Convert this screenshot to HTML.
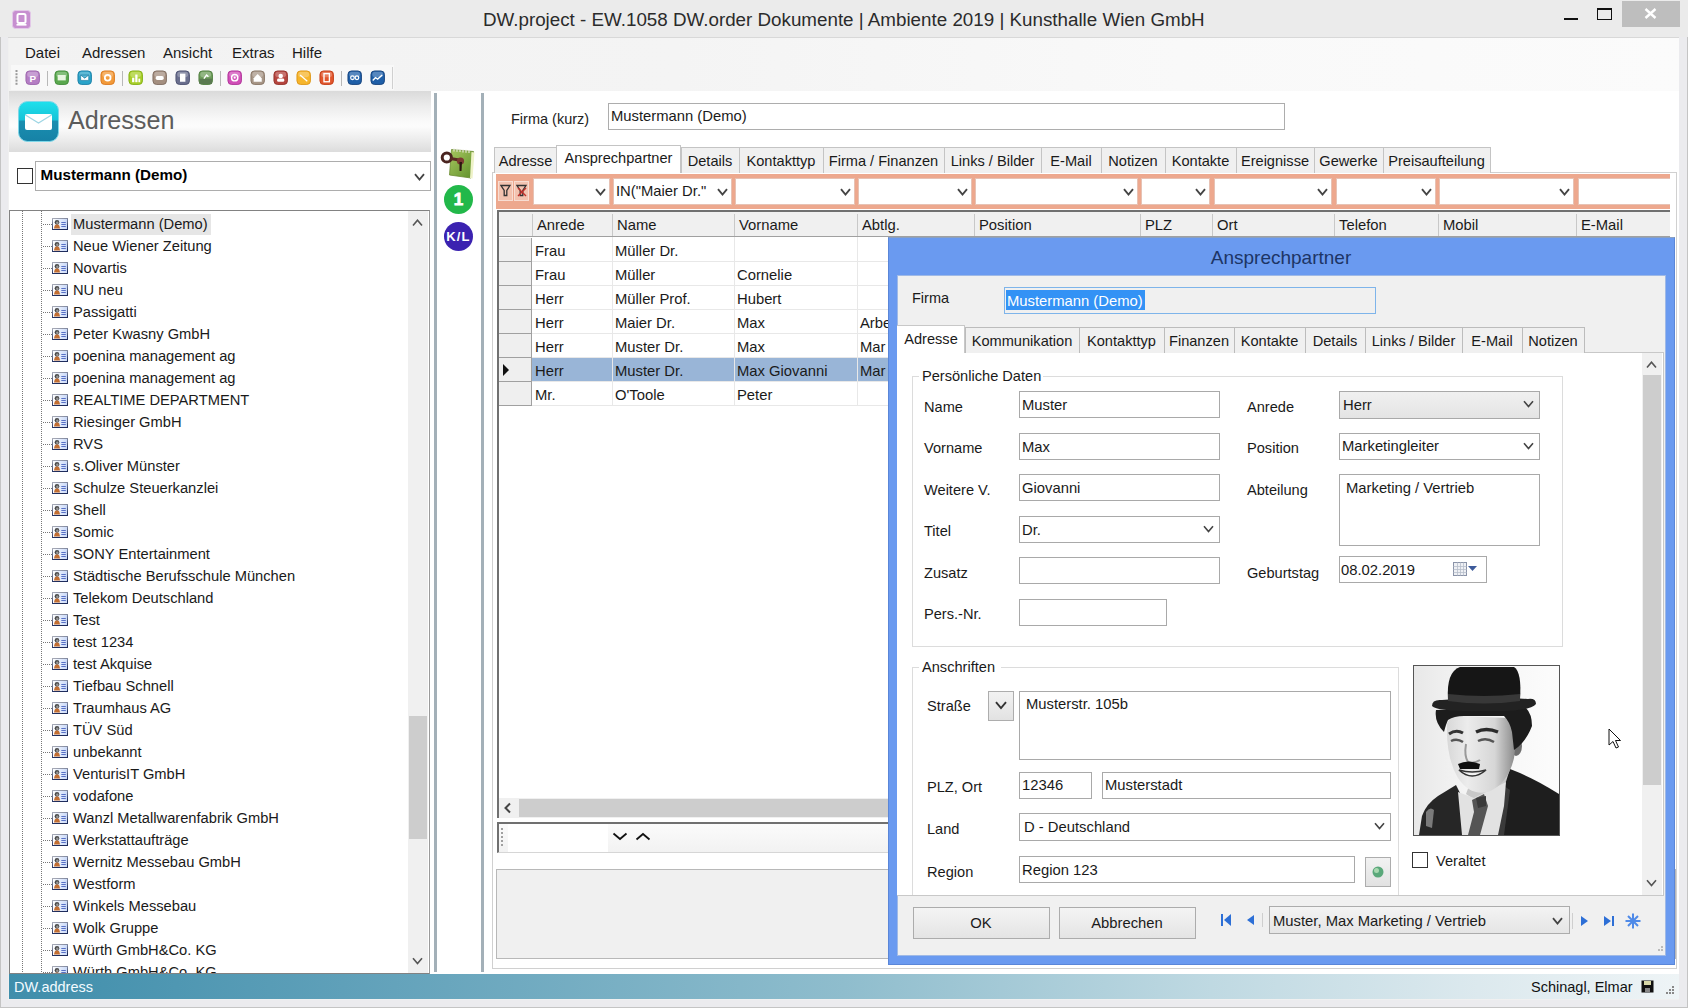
<!DOCTYPE html><html><head><meta charset="utf-8"><style>
html,body{margin:0;padding:0}
body{width:1688px;height:1008px;position:relative;overflow:hidden;background:#ebebee;font-family:"Liberation Sans",sans-serif;color:#1a1a1a}
body div,body svg{position:absolute;box-sizing:border-box}
.t{white-space:pre;line-height:1}
</style></head><body>
<div style="left:0px;top:0px;width:1688px;height:1008px;background:#ebebee;border:1px solid #c4c4c4"></div>
<div style="left:0px;top:0px;width:1688px;height:37px;background:#ebebeb"></div>
<svg style="left:12px;top:10px" width="19" height="19"><rect x="0.5" y="0.5" width="18" height="18" rx="3" fill="#c78fd0" stroke="#e3c8e8"/><rect x="5.5" y="4" width="8" height="9" rx="1.5" fill="none" stroke="#fff" stroke-width="2"/><rect x="4.5" y="14" width="10" height="1.6" fill="#fff"/></svg>
<div class="t" style="left:483px;top:11.19px;font-size:18.8px;color:#2b2b2b">DW.project - EW.1058 DW.order Dokumente | Ambiente 2019 | Kunsthalle Wien GmbH</div>
<div style="left:1564px;top:18px;width:14px;height:2px;background:#111"></div>
<div style="left:1597px;top:8px;width:15px;height:12px;border:1.3px solid #111;border-top-width:2.4px"></div>
<div style="left:1622px;top:1px;width:58px;height:26px;background:#bebebe"></div>
<svg style="left:1644px;top:8px" width="13" height="11"><path d="M1.5 1 L11.5 10 M11.5 1 L1.5 10" stroke="#fff" stroke-width="2.4"/></svg>
<div style="left:8px;top:37px;width:1671px;height:963px;background:#f0f0f0"></div>
<div style="left:8px;top:37px;width:1671px;height:1px;background:#d8d8d8"></div>
<div style="left:9px;top:38px;width:1670px;height:53px;background:linear-gradient(90deg,#f2f2f2 0%,#f4f4f4 40%,#f9f9f9 70%,#fbfbfb 100%)"></div>
<div class="t" style="left:25px;top:45.30px;font-size:15px;">Datei</div>
<div class="t" style="left:82px;top:45.30px;font-size:15px;">Adressen</div>
<div class="t" style="left:163px;top:45.30px;font-size:15px;">Ansicht</div>
<div class="t" style="left:232px;top:45.30px;font-size:15px;">Extras</div>
<div class="t" style="left:292px;top:45.30px;font-size:15px;">Hilfe</div>
<div style="left:11px;top:65px;width:383px;height:25px;background:#f8f8f8"></div>
<svg style="left:15px;top:70px" width="3" height="17"><rect x="0.5" y="0.0" width="2" height="2" fill="#9a9a9a"/><rect x="0.5" y="3.2" width="2" height="2" fill="#9a9a9a"/><rect x="0.5" y="6.4" width="2" height="2" fill="#9a9a9a"/><rect x="0.5" y="9.600000000000001" width="2" height="2" fill="#9a9a9a"/><rect x="0.5" y="12.8" width="2" height="2" fill="#9a9a9a"/></svg>
<svg style="left:25px;top:70px" width="16" height="16" viewBox="0 0 16 16"><g transform="translate(0.5 0.5) scale(0.9)"><rect x="0.5" y="0.5" width="15" height="15" rx="4" fill="#b57ec4" stroke="#9a62aa" stroke-width="1"/><rect x="2" y="1.5" width="12" height="6" rx="3" fill="#fff" opacity="0.25"/><text x="4.5" y="12.5" font-size="11" font-weight="bold" fill="#fff" font-family="Liberation Sans">P</text></g></svg>
<div style="left:47px;top:71px;width:1px;height:15px;background:#b8b8b8"></div>
<svg style="left:54px;top:70px" width="16" height="16" viewBox="0 0 16 16"><g transform="translate(0.5 0.5) scale(0.9)"><rect x="0.5" y="0.5" width="15" height="15" rx="4" fill="#5aa84e" stroke="#3f8a38" stroke-width="1"/><rect x="2" y="1.5" width="12" height="6" rx="3" fill="#fff" opacity="0.25"/><rect x="3.5" y="5" width="9" height="6" fill="#e8f5e0"/></g></svg>
<svg style="left:77px;top:70px" width="16" height="16" viewBox="0 0 16 16"><g transform="translate(0.5 0.5) scale(0.9)"><rect x="0.5" y="0.5" width="15" height="15" rx="4" fill="#2aa3c9" stroke="#1b7fa5" stroke-width="1"/><rect x="2" y="1.5" width="12" height="6" rx="3" fill="#fff" opacity="0.25"/><path d="M3.5 5h9v6h-9z M3.5 5l4.5 3.5l4.5-3.5" fill="#fff" stroke="#1b7fa5" stroke-width="0.8"/></g></svg>
<svg style="left:100px;top:70px" width="16" height="16" viewBox="0 0 16 16"><g transform="translate(0.5 0.5) scale(0.9)"><rect x="0.5" y="0.5" width="15" height="15" rx="4" fill="#f29a3a" stroke="#d9771c" stroke-width="1"/><rect x="2" y="1.5" width="12" height="6" rx="3" fill="#fff" opacity="0.25"/><circle cx="8" cy="8" r="3.2" fill="none" stroke="#fff" stroke-width="2"/></g></svg>
<div style="left:122px;top:71px;width:1px;height:15px;background:#b8b8b8"></div>
<svg style="left:128px;top:70px" width="16" height="16" viewBox="0 0 16 16"><g transform="translate(0.5 0.5) scale(0.9)"><rect x="0.5" y="0.5" width="15" height="15" rx="4" fill="#a9cf2a" stroke="#7fae10" stroke-width="1"/><rect x="2" y="1.5" width="12" height="6" rx="3" fill="#fff" opacity="0.25"/><rect x="4" y="8" width="2.5" height="5" fill="#fff"/><rect x="7.5" y="4.5" width="2.5" height="8.5" fill="#fff"/><rect x="11" y="9" width="2" height="4" fill="#fff"/></g></svg>
<svg style="left:152px;top:70px" width="16" height="16" viewBox="0 0 16 16"><g transform="translate(0.5 0.5) scale(0.9)"><rect x="0.5" y="0.5" width="15" height="15" rx="4" fill="#a48f80" stroke="#7d6a5d" stroke-width="1"/><rect x="2" y="1.5" width="12" height="6" rx="3" fill="#fff" opacity="0.25"/><rect x="3.5" y="6" width="9" height="4.5" rx="2" fill="#fff"/></g></svg>
<svg style="left:175px;top:70px" width="16" height="16" viewBox="0 0 16 16"><g transform="translate(0.5 0.5) scale(0.9)"><rect x="0.5" y="0.5" width="15" height="15" rx="4" fill="#6a6f8e" stroke="#4a4f6e" stroke-width="1"/><rect x="2" y="1.5" width="12" height="6" rx="3" fill="#fff" opacity="0.25"/><rect x="5" y="3.5" width="6" height="9" fill="#fff"/></g></svg>
<svg style="left:198px;top:70px" width="16" height="16" viewBox="0 0 16 16"><g transform="translate(0.5 0.5) scale(0.9)"><rect x="0.5" y="0.5" width="15" height="15" rx="4" fill="#6e9e5a" stroke="#4c7a3c" stroke-width="1"/><rect x="2" y="1.5" width="12" height="6" rx="3" fill="#fff" opacity="0.25"/><rect x="1" y="9" width="14" height="6" fill="#5a7a50"/><path d="M6 9 l3-4 l2 2" stroke="#fff" stroke-width="1.6" fill="none"/></g></svg>
<div style="left:220px;top:71px;width:1px;height:15px;background:#b8b8b8"></div>
<svg style="left:227px;top:70px" width="16" height="16" viewBox="0 0 16 16"><g transform="translate(0.5 0.5) scale(0.9)"><rect x="0.5" y="0.5" width="15" height="15" rx="4" fill="#d14fb8" stroke="#ad2f95" stroke-width="1"/><rect x="2" y="1.5" width="12" height="6" rx="3" fill="#fff" opacity="0.25"/><circle cx="8" cy="8" r="3.5" fill="none" stroke="#fff" stroke-width="1.6"/><circle cx="8" cy="8" r="1.2" fill="#fff"/></g></svg>
<svg style="left:250px;top:70px" width="16" height="16" viewBox="0 0 16 16"><g transform="translate(0.5 0.5) scale(0.9)"><rect x="0.5" y="0.5" width="15" height="15" rx="4" fill="#a89788" stroke="#857262" stroke-width="1"/><rect x="2" y="1.5" width="12" height="6" rx="3" fill="#fff" opacity="0.25"/><path d="M3.5 8.5 L8 4 L12.5 8.5 V12.5 H3.5z" fill="#fff"/></g></svg>
<svg style="left:273px;top:70px" width="16" height="16" viewBox="0 0 16 16"><g transform="translate(0.5 0.5) scale(0.9)"><rect x="0.5" y="0.5" width="15" height="15" rx="4" fill="#b5453f" stroke="#923028" stroke-width="1"/><rect x="2" y="1.5" width="12" height="6" rx="3" fill="#fff" opacity="0.25"/><circle cx="8" cy="6" r="2.5" fill="#fff"/><rect x="4" y="9" width="8" height="3.5" rx="1.5" fill="#fff"/></g></svg>
<svg style="left:296px;top:70px" width="16" height="16" viewBox="0 0 16 16"><g transform="translate(0.5 0.5) scale(0.9)"><rect x="0.5" y="0.5" width="15" height="15" rx="4" fill="#f6b52c" stroke="#dd9414" stroke-width="1"/><rect x="2" y="1.5" width="12" height="6" rx="3" fill="#fff" opacity="0.25"/><path d="M4 5 L12 12" stroke="#fff" stroke-width="1.4"/></g></svg>
<svg style="left:319px;top:70px" width="16" height="16" viewBox="0 0 16 16"><g transform="translate(0.5 0.5) scale(0.9)"><rect x="0.5" y="0.5" width="15" height="15" rx="4" fill="#e2562c" stroke="#c23a14" stroke-width="1"/><rect x="2" y="1.5" width="12" height="6" rx="3" fill="#fff" opacity="0.25"/><rect x="5" y="3.5" width="6" height="9" fill="none" stroke="#fff" stroke-width="1.5"/></g></svg>
<div style="left:341px;top:71px;width:1px;height:15px;background:#b8b8b8"></div>
<svg style="left:347px;top:70px" width="16" height="16" viewBox="0 0 16 16"><g transform="translate(0.5 0.5) scale(0.9)"><rect x="0.5" y="0.5" width="15" height="15" rx="4" fill="#1f5fa8" stroke="#14417a" stroke-width="1"/><rect x="2" y="1.5" width="12" height="6" rx="3" fill="#fff" opacity="0.25"/><circle cx="5.5" cy="8" r="2" fill="none" stroke="#fff" stroke-width="1.4"/><circle cx="10.5" cy="8" r="2" fill="none" stroke="#fff" stroke-width="1.4"/></g></svg>
<svg style="left:370px;top:70px" width="16" height="16" viewBox="0 0 16 16"><g transform="translate(0.5 0.5) scale(0.9)"><rect x="0.5" y="0.5" width="15" height="15" rx="4" fill="#1f5fa8" stroke="#14417a" stroke-width="1"/><rect x="2" y="1.5" width="12" height="6" rx="3" fill="#fff" opacity="0.25"/><path d="M2.5 11 L5.5 8 L8 9.5 L13 5" stroke="#fff" stroke-width="1.5" fill="none"/></g></svg>
<div style="left:392px;top:67px;width:1px;height:22px;background:#d0d0d0"></div>
<div style="left:9px;top:91px;width:1670px;height:883px;background:#fff"></div>
<div style="left:9px;top:91px;width:422px;height:61px;background:linear-gradient(#dadada 0%,#ececec 25%,#fafafa 50%,#fcfcfc 58%,#ececec 80%,#dcdcdc 100%)"></div>
<svg style="left:18px;top:101px" width="41" height="41" viewBox="0 0 41 41">
<defs><linearGradient id="gi" x1="0" y1="0" x2="0" y2="1"><stop offset="0" stop-color="#1fe0ec"/><stop offset="0.45" stop-color="#17c4d8"/><stop offset="0.5" stop-color="#1a8eb0"/><stop offset="1" stop-color="#1682a6"/></linearGradient></defs>
<rect x="0.5" y="0.5" width="40" height="40" rx="9" fill="url(#gi)" stroke="#7fd7e8"/>
<rect x="7" y="13" width="27" height="16" rx="2" fill="#fff"/>
<path d="M7.5 14 L20.5 22 L33.5 14" fill="none" stroke="#9fd6e4" stroke-width="1.2"/>
</svg>
<div class="t" style="left:68px;top:108.27px;font-size:25.2px;color:#5c5c5c">Adressen</div>
<div style="left:17px;top:168px;width:16px;height:16px;background:#fff;border:1px solid #333"></div>
<div style="left:35px;top:161px;width:396px;height:30px;background:#fff;border:1px solid #adadad"></div>
<div class="t" style="left:40.5px;top:167.13px;font-size:15.2px;font-weight:bold;color:#000">Mustermann (Demo)</div>
<svg style="left:414px;top:173px" width="11" height="8.5"><path d="M1 1.2 L5.5 6.5 L10 1.2" fill="none" stroke="#444" stroke-width="1.8"/></svg>
<div style="left:9px;top:210px;width:421px;height:764px;border:1px solid #828282;border-right-color:#9a9a9a;background:#fff;overflow:hidden"></div>
<svg style="left:0;top:0" width="0" height="0"><defs><linearGradient id="ticb" x1="0" y1="0" x2="0.3" y2="1"><stop offset="0" stop-color="#a8acb8"/><stop offset="1" stop-color="#1e2c5c"/></linearGradient><linearGradient id="ticf" x1="0" y1="0" x2="1" y2="0"><stop offset="0" stop-color="#ffffff"/><stop offset="1" stop-color="#c8d8f8"/></linearGradient></defs></svg>
<div style="left:10px;top:211px;width:398px;height:762px;overflow:hidden">
<div style="left:12px;top:0;width:1px;height:762px;background:repeating-linear-gradient(#777 0 1px,transparent 1px 2px)"></div>
<div style="left:31px;top:0;width:1px;height:762px;background:repeating-linear-gradient(#777 0 1px,transparent 1px 2px)"></div>
<div style="left:61px;top:3px;width:140px;height:21px;background:#e6e6e6"></div>
<div style="left:33px;top:13px;width:9px;height:1px;background:repeating-linear-gradient(90deg,#777 0 1px,transparent 1px 2px)"></div>
<svg style="left:42px;top:7px" width="16" height="12"><rect x="0.5" y="0.5" width="15" height="11" fill="url(#ticf)" stroke="url(#ticb)"/><path d="M2 10.5 Q2.5 6 5 6.2 Q7.5 6 8 10.5z" fill="#c26e32"/><circle cx="5" cy="4.3" r="2.3" fill="#4a4a4a"/><circle cx="5.3" cy="4.8" r="1.2" fill="#9a9a9a"/><path d="M9.3 4.5h4.5M9.3 6.5h4.5M9.3 8.5h4.5" stroke="#4a64c0" stroke-width="0.9"/></svg>
<div class="t" style="left:63px;top:5.56px;font-size:14.7px;color:#1a1a1a">Mustermann (Demo)</div>
<div style="left:33px;top:35px;width:9px;height:1px;background:repeating-linear-gradient(90deg,#777 0 1px,transparent 1px 2px)"></div>
<svg style="left:42px;top:29px" width="16" height="12"><rect x="0.5" y="0.5" width="15" height="11" fill="url(#ticf)" stroke="url(#ticb)"/><path d="M2 10.5 Q2.5 6 5 6.2 Q7.5 6 8 10.5z" fill="#c26e32"/><circle cx="5" cy="4.3" r="2.3" fill="#4a4a4a"/><circle cx="5.3" cy="4.8" r="1.2" fill="#9a9a9a"/><path d="M9.3 4.5h4.5M9.3 6.5h4.5M9.3 8.5h4.5" stroke="#4a64c0" stroke-width="0.9"/></svg>
<div class="t" style="left:63px;top:27.56px;font-size:14.7px;color:#1a1a1a">Neue Wiener Zeitung</div>
<div style="left:33px;top:57px;width:9px;height:1px;background:repeating-linear-gradient(90deg,#777 0 1px,transparent 1px 2px)"></div>
<svg style="left:42px;top:51px" width="16" height="12"><rect x="0.5" y="0.5" width="15" height="11" fill="url(#ticf)" stroke="url(#ticb)"/><path d="M2 10.5 Q2.5 6 5 6.2 Q7.5 6 8 10.5z" fill="#c26e32"/><circle cx="5" cy="4.3" r="2.3" fill="#4a4a4a"/><circle cx="5.3" cy="4.8" r="1.2" fill="#9a9a9a"/><path d="M9.3 4.5h4.5M9.3 6.5h4.5M9.3 8.5h4.5" stroke="#4a64c0" stroke-width="0.9"/></svg>
<div class="t" style="left:63px;top:49.56px;font-size:14.7px;color:#1a1a1a">Novartis</div>
<div style="left:33px;top:79px;width:9px;height:1px;background:repeating-linear-gradient(90deg,#777 0 1px,transparent 1px 2px)"></div>
<svg style="left:42px;top:73px" width="16" height="12"><rect x="0.5" y="0.5" width="15" height="11" fill="url(#ticf)" stroke="url(#ticb)"/><path d="M2 10.5 Q2.5 6 5 6.2 Q7.5 6 8 10.5z" fill="#c26e32"/><circle cx="5" cy="4.3" r="2.3" fill="#4a4a4a"/><circle cx="5.3" cy="4.8" r="1.2" fill="#9a9a9a"/><path d="M9.3 4.5h4.5M9.3 6.5h4.5M9.3 8.5h4.5" stroke="#4a64c0" stroke-width="0.9"/></svg>
<div class="t" style="left:63px;top:71.56px;font-size:14.7px;color:#1a1a1a">NU neu</div>
<div style="left:33px;top:101px;width:9px;height:1px;background:repeating-linear-gradient(90deg,#777 0 1px,transparent 1px 2px)"></div>
<svg style="left:42px;top:95px" width="16" height="12"><rect x="0.5" y="0.5" width="15" height="11" fill="url(#ticf)" stroke="url(#ticb)"/><path d="M2 10.5 Q2.5 6 5 6.2 Q7.5 6 8 10.5z" fill="#c26e32"/><circle cx="5" cy="4.3" r="2.3" fill="#4a4a4a"/><circle cx="5.3" cy="4.8" r="1.2" fill="#9a9a9a"/><path d="M9.3 4.5h4.5M9.3 6.5h4.5M9.3 8.5h4.5" stroke="#4a64c0" stroke-width="0.9"/></svg>
<div class="t" style="left:63px;top:93.56px;font-size:14.7px;color:#1a1a1a">Passigatti</div>
<div style="left:33px;top:123px;width:9px;height:1px;background:repeating-linear-gradient(90deg,#777 0 1px,transparent 1px 2px)"></div>
<svg style="left:42px;top:117px" width="16" height="12"><rect x="0.5" y="0.5" width="15" height="11" fill="url(#ticf)" stroke="url(#ticb)"/><path d="M2 10.5 Q2.5 6 5 6.2 Q7.5 6 8 10.5z" fill="#c26e32"/><circle cx="5" cy="4.3" r="2.3" fill="#4a4a4a"/><circle cx="5.3" cy="4.8" r="1.2" fill="#9a9a9a"/><path d="M9.3 4.5h4.5M9.3 6.5h4.5M9.3 8.5h4.5" stroke="#4a64c0" stroke-width="0.9"/></svg>
<div class="t" style="left:63px;top:115.56px;font-size:14.7px;color:#1a1a1a">Peter Kwasny GmbH</div>
<div style="left:33px;top:145px;width:9px;height:1px;background:repeating-linear-gradient(90deg,#777 0 1px,transparent 1px 2px)"></div>
<svg style="left:42px;top:139px" width="16" height="12"><rect x="0.5" y="0.5" width="15" height="11" fill="url(#ticf)" stroke="url(#ticb)"/><path d="M2 10.5 Q2.5 6 5 6.2 Q7.5 6 8 10.5z" fill="#c26e32"/><circle cx="5" cy="4.3" r="2.3" fill="#4a4a4a"/><circle cx="5.3" cy="4.8" r="1.2" fill="#9a9a9a"/><path d="M9.3 4.5h4.5M9.3 6.5h4.5M9.3 8.5h4.5" stroke="#4a64c0" stroke-width="0.9"/></svg>
<div class="t" style="left:63px;top:137.56px;font-size:14.7px;color:#1a1a1a">poenina management ag</div>
<div style="left:33px;top:167px;width:9px;height:1px;background:repeating-linear-gradient(90deg,#777 0 1px,transparent 1px 2px)"></div>
<svg style="left:42px;top:161px" width="16" height="12"><rect x="0.5" y="0.5" width="15" height="11" fill="url(#ticf)" stroke="url(#ticb)"/><path d="M2 10.5 Q2.5 6 5 6.2 Q7.5 6 8 10.5z" fill="#c26e32"/><circle cx="5" cy="4.3" r="2.3" fill="#4a4a4a"/><circle cx="5.3" cy="4.8" r="1.2" fill="#9a9a9a"/><path d="M9.3 4.5h4.5M9.3 6.5h4.5M9.3 8.5h4.5" stroke="#4a64c0" stroke-width="0.9"/></svg>
<div class="t" style="left:63px;top:159.56px;font-size:14.7px;color:#1a1a1a">poenina management ag</div>
<div style="left:33px;top:189px;width:9px;height:1px;background:repeating-linear-gradient(90deg,#777 0 1px,transparent 1px 2px)"></div>
<svg style="left:42px;top:183px" width="16" height="12"><rect x="0.5" y="0.5" width="15" height="11" fill="url(#ticf)" stroke="url(#ticb)"/><path d="M2 10.5 Q2.5 6 5 6.2 Q7.5 6 8 10.5z" fill="#c26e32"/><circle cx="5" cy="4.3" r="2.3" fill="#4a4a4a"/><circle cx="5.3" cy="4.8" r="1.2" fill="#9a9a9a"/><path d="M9.3 4.5h4.5M9.3 6.5h4.5M9.3 8.5h4.5" stroke="#4a64c0" stroke-width="0.9"/></svg>
<div class="t" style="left:63px;top:181.56px;font-size:14.7px;color:#1a1a1a">REALTIME DEPARTMENT</div>
<div style="left:33px;top:211px;width:9px;height:1px;background:repeating-linear-gradient(90deg,#777 0 1px,transparent 1px 2px)"></div>
<svg style="left:42px;top:205px" width="16" height="12"><rect x="0.5" y="0.5" width="15" height="11" fill="url(#ticf)" stroke="url(#ticb)"/><path d="M2 10.5 Q2.5 6 5 6.2 Q7.5 6 8 10.5z" fill="#c26e32"/><circle cx="5" cy="4.3" r="2.3" fill="#4a4a4a"/><circle cx="5.3" cy="4.8" r="1.2" fill="#9a9a9a"/><path d="M9.3 4.5h4.5M9.3 6.5h4.5M9.3 8.5h4.5" stroke="#4a64c0" stroke-width="0.9"/></svg>
<div class="t" style="left:63px;top:203.56px;font-size:14.7px;color:#1a1a1a">Riesinger GmbH</div>
<div style="left:33px;top:233px;width:9px;height:1px;background:repeating-linear-gradient(90deg,#777 0 1px,transparent 1px 2px)"></div>
<svg style="left:42px;top:227px" width="16" height="12"><rect x="0.5" y="0.5" width="15" height="11" fill="url(#ticf)" stroke="url(#ticb)"/><path d="M2 10.5 Q2.5 6 5 6.2 Q7.5 6 8 10.5z" fill="#c26e32"/><circle cx="5" cy="4.3" r="2.3" fill="#4a4a4a"/><circle cx="5.3" cy="4.8" r="1.2" fill="#9a9a9a"/><path d="M9.3 4.5h4.5M9.3 6.5h4.5M9.3 8.5h4.5" stroke="#4a64c0" stroke-width="0.9"/></svg>
<div class="t" style="left:63px;top:225.56px;font-size:14.7px;color:#1a1a1a">RVS</div>
<div style="left:33px;top:255px;width:9px;height:1px;background:repeating-linear-gradient(90deg,#777 0 1px,transparent 1px 2px)"></div>
<svg style="left:42px;top:249px" width="16" height="12"><rect x="0.5" y="0.5" width="15" height="11" fill="url(#ticf)" stroke="url(#ticb)"/><path d="M2 10.5 Q2.5 6 5 6.2 Q7.5 6 8 10.5z" fill="#c26e32"/><circle cx="5" cy="4.3" r="2.3" fill="#4a4a4a"/><circle cx="5.3" cy="4.8" r="1.2" fill="#9a9a9a"/><path d="M9.3 4.5h4.5M9.3 6.5h4.5M9.3 8.5h4.5" stroke="#4a64c0" stroke-width="0.9"/></svg>
<div class="t" style="left:63px;top:247.56px;font-size:14.7px;color:#1a1a1a">s.Oliver Münster</div>
<div style="left:33px;top:277px;width:9px;height:1px;background:repeating-linear-gradient(90deg,#777 0 1px,transparent 1px 2px)"></div>
<svg style="left:42px;top:271px" width="16" height="12"><rect x="0.5" y="0.5" width="15" height="11" fill="url(#ticf)" stroke="url(#ticb)"/><path d="M2 10.5 Q2.5 6 5 6.2 Q7.5 6 8 10.5z" fill="#c26e32"/><circle cx="5" cy="4.3" r="2.3" fill="#4a4a4a"/><circle cx="5.3" cy="4.8" r="1.2" fill="#9a9a9a"/><path d="M9.3 4.5h4.5M9.3 6.5h4.5M9.3 8.5h4.5" stroke="#4a64c0" stroke-width="0.9"/></svg>
<div class="t" style="left:63px;top:269.56px;font-size:14.7px;color:#1a1a1a">Schulze Steuerkanzlei</div>
<div style="left:33px;top:299px;width:9px;height:1px;background:repeating-linear-gradient(90deg,#777 0 1px,transparent 1px 2px)"></div>
<svg style="left:42px;top:293px" width="16" height="12"><rect x="0.5" y="0.5" width="15" height="11" fill="url(#ticf)" stroke="url(#ticb)"/><path d="M2 10.5 Q2.5 6 5 6.2 Q7.5 6 8 10.5z" fill="#c26e32"/><circle cx="5" cy="4.3" r="2.3" fill="#4a4a4a"/><circle cx="5.3" cy="4.8" r="1.2" fill="#9a9a9a"/><path d="M9.3 4.5h4.5M9.3 6.5h4.5M9.3 8.5h4.5" stroke="#4a64c0" stroke-width="0.9"/></svg>
<div class="t" style="left:63px;top:291.56px;font-size:14.7px;color:#1a1a1a">Shell</div>
<div style="left:33px;top:321px;width:9px;height:1px;background:repeating-linear-gradient(90deg,#777 0 1px,transparent 1px 2px)"></div>
<svg style="left:42px;top:315px" width="16" height="12"><rect x="0.5" y="0.5" width="15" height="11" fill="url(#ticf)" stroke="url(#ticb)"/><path d="M2 10.5 Q2.5 6 5 6.2 Q7.5 6 8 10.5z" fill="#c26e32"/><circle cx="5" cy="4.3" r="2.3" fill="#4a4a4a"/><circle cx="5.3" cy="4.8" r="1.2" fill="#9a9a9a"/><path d="M9.3 4.5h4.5M9.3 6.5h4.5M9.3 8.5h4.5" stroke="#4a64c0" stroke-width="0.9"/></svg>
<div class="t" style="left:63px;top:313.56px;font-size:14.7px;color:#1a1a1a">Somic</div>
<div style="left:33px;top:343px;width:9px;height:1px;background:repeating-linear-gradient(90deg,#777 0 1px,transparent 1px 2px)"></div>
<svg style="left:42px;top:337px" width="16" height="12"><rect x="0.5" y="0.5" width="15" height="11" fill="url(#ticf)" stroke="url(#ticb)"/><path d="M2 10.5 Q2.5 6 5 6.2 Q7.5 6 8 10.5z" fill="#c26e32"/><circle cx="5" cy="4.3" r="2.3" fill="#4a4a4a"/><circle cx="5.3" cy="4.8" r="1.2" fill="#9a9a9a"/><path d="M9.3 4.5h4.5M9.3 6.5h4.5M9.3 8.5h4.5" stroke="#4a64c0" stroke-width="0.9"/></svg>
<div class="t" style="left:63px;top:335.56px;font-size:14.7px;color:#1a1a1a">SONY Entertainment</div>
<div style="left:33px;top:365px;width:9px;height:1px;background:repeating-linear-gradient(90deg,#777 0 1px,transparent 1px 2px)"></div>
<svg style="left:42px;top:359px" width="16" height="12"><rect x="0.5" y="0.5" width="15" height="11" fill="url(#ticf)" stroke="url(#ticb)"/><path d="M2 10.5 Q2.5 6 5 6.2 Q7.5 6 8 10.5z" fill="#c26e32"/><circle cx="5" cy="4.3" r="2.3" fill="#4a4a4a"/><circle cx="5.3" cy="4.8" r="1.2" fill="#9a9a9a"/><path d="M9.3 4.5h4.5M9.3 6.5h4.5M9.3 8.5h4.5" stroke="#4a64c0" stroke-width="0.9"/></svg>
<div class="t" style="left:63px;top:357.56px;font-size:14.7px;color:#1a1a1a">Städtische Berufsschule München</div>
<div style="left:33px;top:387px;width:9px;height:1px;background:repeating-linear-gradient(90deg,#777 0 1px,transparent 1px 2px)"></div>
<svg style="left:42px;top:381px" width="16" height="12"><rect x="0.5" y="0.5" width="15" height="11" fill="url(#ticf)" stroke="url(#ticb)"/><path d="M2 10.5 Q2.5 6 5 6.2 Q7.5 6 8 10.5z" fill="#c26e32"/><circle cx="5" cy="4.3" r="2.3" fill="#4a4a4a"/><circle cx="5.3" cy="4.8" r="1.2" fill="#9a9a9a"/><path d="M9.3 4.5h4.5M9.3 6.5h4.5M9.3 8.5h4.5" stroke="#4a64c0" stroke-width="0.9"/></svg>
<div class="t" style="left:63px;top:379.56px;font-size:14.7px;color:#1a1a1a">Telekom Deutschland</div>
<div style="left:33px;top:409px;width:9px;height:1px;background:repeating-linear-gradient(90deg,#777 0 1px,transparent 1px 2px)"></div>
<svg style="left:42px;top:403px" width="16" height="12"><rect x="0.5" y="0.5" width="15" height="11" fill="url(#ticf)" stroke="url(#ticb)"/><path d="M2 10.5 Q2.5 6 5 6.2 Q7.5 6 8 10.5z" fill="#c26e32"/><circle cx="5" cy="4.3" r="2.3" fill="#4a4a4a"/><circle cx="5.3" cy="4.8" r="1.2" fill="#9a9a9a"/><path d="M9.3 4.5h4.5M9.3 6.5h4.5M9.3 8.5h4.5" stroke="#4a64c0" stroke-width="0.9"/></svg>
<div class="t" style="left:63px;top:401.56px;font-size:14.7px;color:#1a1a1a">Test</div>
<div style="left:33px;top:431px;width:9px;height:1px;background:repeating-linear-gradient(90deg,#777 0 1px,transparent 1px 2px)"></div>
<svg style="left:42px;top:425px" width="16" height="12"><rect x="0.5" y="0.5" width="15" height="11" fill="url(#ticf)" stroke="url(#ticb)"/><path d="M2 10.5 Q2.5 6 5 6.2 Q7.5 6 8 10.5z" fill="#c26e32"/><circle cx="5" cy="4.3" r="2.3" fill="#4a4a4a"/><circle cx="5.3" cy="4.8" r="1.2" fill="#9a9a9a"/><path d="M9.3 4.5h4.5M9.3 6.5h4.5M9.3 8.5h4.5" stroke="#4a64c0" stroke-width="0.9"/></svg>
<div class="t" style="left:63px;top:423.56px;font-size:14.7px;color:#1a1a1a">test 1234</div>
<div style="left:33px;top:453px;width:9px;height:1px;background:repeating-linear-gradient(90deg,#777 0 1px,transparent 1px 2px)"></div>
<svg style="left:42px;top:447px" width="16" height="12"><rect x="0.5" y="0.5" width="15" height="11" fill="url(#ticf)" stroke="url(#ticb)"/><path d="M2 10.5 Q2.5 6 5 6.2 Q7.5 6 8 10.5z" fill="#c26e32"/><circle cx="5" cy="4.3" r="2.3" fill="#4a4a4a"/><circle cx="5.3" cy="4.8" r="1.2" fill="#9a9a9a"/><path d="M9.3 4.5h4.5M9.3 6.5h4.5M9.3 8.5h4.5" stroke="#4a64c0" stroke-width="0.9"/></svg>
<div class="t" style="left:63px;top:445.56px;font-size:14.7px;color:#1a1a1a">test Akquise</div>
<div style="left:33px;top:475px;width:9px;height:1px;background:repeating-linear-gradient(90deg,#777 0 1px,transparent 1px 2px)"></div>
<svg style="left:42px;top:469px" width="16" height="12"><rect x="0.5" y="0.5" width="15" height="11" fill="url(#ticf)" stroke="url(#ticb)"/><path d="M2 10.5 Q2.5 6 5 6.2 Q7.5 6 8 10.5z" fill="#c26e32"/><circle cx="5" cy="4.3" r="2.3" fill="#4a4a4a"/><circle cx="5.3" cy="4.8" r="1.2" fill="#9a9a9a"/><path d="M9.3 4.5h4.5M9.3 6.5h4.5M9.3 8.5h4.5" stroke="#4a64c0" stroke-width="0.9"/></svg>
<div class="t" style="left:63px;top:467.56px;font-size:14.7px;color:#1a1a1a">Tiefbau Schnell</div>
<div style="left:33px;top:497px;width:9px;height:1px;background:repeating-linear-gradient(90deg,#777 0 1px,transparent 1px 2px)"></div>
<svg style="left:42px;top:491px" width="16" height="12"><rect x="0.5" y="0.5" width="15" height="11" fill="url(#ticf)" stroke="url(#ticb)"/><path d="M2 10.5 Q2.5 6 5 6.2 Q7.5 6 8 10.5z" fill="#c26e32"/><circle cx="5" cy="4.3" r="2.3" fill="#4a4a4a"/><circle cx="5.3" cy="4.8" r="1.2" fill="#9a9a9a"/><path d="M9.3 4.5h4.5M9.3 6.5h4.5M9.3 8.5h4.5" stroke="#4a64c0" stroke-width="0.9"/></svg>
<div class="t" style="left:63px;top:489.56px;font-size:14.7px;color:#1a1a1a">Traumhaus AG</div>
<div style="left:33px;top:519px;width:9px;height:1px;background:repeating-linear-gradient(90deg,#777 0 1px,transparent 1px 2px)"></div>
<svg style="left:42px;top:513px" width="16" height="12"><rect x="0.5" y="0.5" width="15" height="11" fill="url(#ticf)" stroke="url(#ticb)"/><path d="M2 10.5 Q2.5 6 5 6.2 Q7.5 6 8 10.5z" fill="#c26e32"/><circle cx="5" cy="4.3" r="2.3" fill="#4a4a4a"/><circle cx="5.3" cy="4.8" r="1.2" fill="#9a9a9a"/><path d="M9.3 4.5h4.5M9.3 6.5h4.5M9.3 8.5h4.5" stroke="#4a64c0" stroke-width="0.9"/></svg>
<div class="t" style="left:63px;top:511.56px;font-size:14.7px;color:#1a1a1a">TÜV Süd</div>
<div style="left:33px;top:541px;width:9px;height:1px;background:repeating-linear-gradient(90deg,#777 0 1px,transparent 1px 2px)"></div>
<svg style="left:42px;top:535px" width="16" height="12"><rect x="0.5" y="0.5" width="15" height="11" fill="url(#ticf)" stroke="url(#ticb)"/><path d="M2 10.5 Q2.5 6 5 6.2 Q7.5 6 8 10.5z" fill="#c26e32"/><circle cx="5" cy="4.3" r="2.3" fill="#4a4a4a"/><circle cx="5.3" cy="4.8" r="1.2" fill="#9a9a9a"/><path d="M9.3 4.5h4.5M9.3 6.5h4.5M9.3 8.5h4.5" stroke="#4a64c0" stroke-width="0.9"/></svg>
<div class="t" style="left:63px;top:533.56px;font-size:14.7px;color:#1a1a1a">unbekannt</div>
<div style="left:33px;top:563px;width:9px;height:1px;background:repeating-linear-gradient(90deg,#777 0 1px,transparent 1px 2px)"></div>
<svg style="left:42px;top:557px" width="16" height="12"><rect x="0.5" y="0.5" width="15" height="11" fill="url(#ticf)" stroke="url(#ticb)"/><path d="M2 10.5 Q2.5 6 5 6.2 Q7.5 6 8 10.5z" fill="#c26e32"/><circle cx="5" cy="4.3" r="2.3" fill="#4a4a4a"/><circle cx="5.3" cy="4.8" r="1.2" fill="#9a9a9a"/><path d="M9.3 4.5h4.5M9.3 6.5h4.5M9.3 8.5h4.5" stroke="#4a64c0" stroke-width="0.9"/></svg>
<div class="t" style="left:63px;top:555.56px;font-size:14.7px;color:#1a1a1a">VenturisIT GmbH</div>
<div style="left:33px;top:585px;width:9px;height:1px;background:repeating-linear-gradient(90deg,#777 0 1px,transparent 1px 2px)"></div>
<svg style="left:42px;top:579px" width="16" height="12"><rect x="0.5" y="0.5" width="15" height="11" fill="url(#ticf)" stroke="url(#ticb)"/><path d="M2 10.5 Q2.5 6 5 6.2 Q7.5 6 8 10.5z" fill="#c26e32"/><circle cx="5" cy="4.3" r="2.3" fill="#4a4a4a"/><circle cx="5.3" cy="4.8" r="1.2" fill="#9a9a9a"/><path d="M9.3 4.5h4.5M9.3 6.5h4.5M9.3 8.5h4.5" stroke="#4a64c0" stroke-width="0.9"/></svg>
<div class="t" style="left:63px;top:577.56px;font-size:14.7px;color:#1a1a1a">vodafone</div>
<div style="left:33px;top:607px;width:9px;height:1px;background:repeating-linear-gradient(90deg,#777 0 1px,transparent 1px 2px)"></div>
<svg style="left:42px;top:601px" width="16" height="12"><rect x="0.5" y="0.5" width="15" height="11" fill="url(#ticf)" stroke="url(#ticb)"/><path d="M2 10.5 Q2.5 6 5 6.2 Q7.5 6 8 10.5z" fill="#c26e32"/><circle cx="5" cy="4.3" r="2.3" fill="#4a4a4a"/><circle cx="5.3" cy="4.8" r="1.2" fill="#9a9a9a"/><path d="M9.3 4.5h4.5M9.3 6.5h4.5M9.3 8.5h4.5" stroke="#4a64c0" stroke-width="0.9"/></svg>
<div class="t" style="left:63px;top:599.56px;font-size:14.7px;color:#1a1a1a">Wanzl Metallwarenfabrik GmbH</div>
<div style="left:33px;top:629px;width:9px;height:1px;background:repeating-linear-gradient(90deg,#777 0 1px,transparent 1px 2px)"></div>
<svg style="left:42px;top:623px" width="16" height="12"><rect x="0.5" y="0.5" width="15" height="11" fill="url(#ticf)" stroke="url(#ticb)"/><path d="M2 10.5 Q2.5 6 5 6.2 Q7.5 6 8 10.5z" fill="#c26e32"/><circle cx="5" cy="4.3" r="2.3" fill="#4a4a4a"/><circle cx="5.3" cy="4.8" r="1.2" fill="#9a9a9a"/><path d="M9.3 4.5h4.5M9.3 6.5h4.5M9.3 8.5h4.5" stroke="#4a64c0" stroke-width="0.9"/></svg>
<div class="t" style="left:63px;top:621.56px;font-size:14.7px;color:#1a1a1a">Werkstattaufträge</div>
<div style="left:33px;top:651px;width:9px;height:1px;background:repeating-linear-gradient(90deg,#777 0 1px,transparent 1px 2px)"></div>
<svg style="left:42px;top:645px" width="16" height="12"><rect x="0.5" y="0.5" width="15" height="11" fill="url(#ticf)" stroke="url(#ticb)"/><path d="M2 10.5 Q2.5 6 5 6.2 Q7.5 6 8 10.5z" fill="#c26e32"/><circle cx="5" cy="4.3" r="2.3" fill="#4a4a4a"/><circle cx="5.3" cy="4.8" r="1.2" fill="#9a9a9a"/><path d="M9.3 4.5h4.5M9.3 6.5h4.5M9.3 8.5h4.5" stroke="#4a64c0" stroke-width="0.9"/></svg>
<div class="t" style="left:63px;top:643.56px;font-size:14.7px;color:#1a1a1a">Wernitz Messebau GmbH</div>
<div style="left:33px;top:673px;width:9px;height:1px;background:repeating-linear-gradient(90deg,#777 0 1px,transparent 1px 2px)"></div>
<svg style="left:42px;top:667px" width="16" height="12"><rect x="0.5" y="0.5" width="15" height="11" fill="url(#ticf)" stroke="url(#ticb)"/><path d="M2 10.5 Q2.5 6 5 6.2 Q7.5 6 8 10.5z" fill="#c26e32"/><circle cx="5" cy="4.3" r="2.3" fill="#4a4a4a"/><circle cx="5.3" cy="4.8" r="1.2" fill="#9a9a9a"/><path d="M9.3 4.5h4.5M9.3 6.5h4.5M9.3 8.5h4.5" stroke="#4a64c0" stroke-width="0.9"/></svg>
<div class="t" style="left:63px;top:665.56px;font-size:14.7px;color:#1a1a1a">Westform</div>
<div style="left:33px;top:695px;width:9px;height:1px;background:repeating-linear-gradient(90deg,#777 0 1px,transparent 1px 2px)"></div>
<svg style="left:42px;top:689px" width="16" height="12"><rect x="0.5" y="0.5" width="15" height="11" fill="url(#ticf)" stroke="url(#ticb)"/><path d="M2 10.5 Q2.5 6 5 6.2 Q7.5 6 8 10.5z" fill="#c26e32"/><circle cx="5" cy="4.3" r="2.3" fill="#4a4a4a"/><circle cx="5.3" cy="4.8" r="1.2" fill="#9a9a9a"/><path d="M9.3 4.5h4.5M9.3 6.5h4.5M9.3 8.5h4.5" stroke="#4a64c0" stroke-width="0.9"/></svg>
<div class="t" style="left:63px;top:687.56px;font-size:14.7px;color:#1a1a1a">Winkels Messebau</div>
<div style="left:33px;top:717px;width:9px;height:1px;background:repeating-linear-gradient(90deg,#777 0 1px,transparent 1px 2px)"></div>
<svg style="left:42px;top:711px" width="16" height="12"><rect x="0.5" y="0.5" width="15" height="11" fill="url(#ticf)" stroke="url(#ticb)"/><path d="M2 10.5 Q2.5 6 5 6.2 Q7.5 6 8 10.5z" fill="#c26e32"/><circle cx="5" cy="4.3" r="2.3" fill="#4a4a4a"/><circle cx="5.3" cy="4.8" r="1.2" fill="#9a9a9a"/><path d="M9.3 4.5h4.5M9.3 6.5h4.5M9.3 8.5h4.5" stroke="#4a64c0" stroke-width="0.9"/></svg>
<div class="t" style="left:63px;top:709.56px;font-size:14.7px;color:#1a1a1a">Wolk Gruppe</div>
<div style="left:33px;top:739px;width:9px;height:1px;background:repeating-linear-gradient(90deg,#777 0 1px,transparent 1px 2px)"></div>
<svg style="left:42px;top:733px" width="16" height="12"><rect x="0.5" y="0.5" width="15" height="11" fill="url(#ticf)" stroke="url(#ticb)"/><path d="M2 10.5 Q2.5 6 5 6.2 Q7.5 6 8 10.5z" fill="#c26e32"/><circle cx="5" cy="4.3" r="2.3" fill="#4a4a4a"/><circle cx="5.3" cy="4.8" r="1.2" fill="#9a9a9a"/><path d="M9.3 4.5h4.5M9.3 6.5h4.5M9.3 8.5h4.5" stroke="#4a64c0" stroke-width="0.9"/></svg>
<div class="t" style="left:63px;top:731.56px;font-size:14.7px;color:#1a1a1a">Würth GmbH&amp;Co. KG</div>
<div style="left:33px;top:761px;width:9px;height:1px;background:repeating-linear-gradient(90deg,#777 0 1px,transparent 1px 2px)"></div>
<svg style="left:42px;top:755px" width="16" height="12"><rect x="0.5" y="0.5" width="15" height="11" fill="url(#ticf)" stroke="url(#ticb)"/><path d="M2 10.5 Q2.5 6 5 6.2 Q7.5 6 8 10.5z" fill="#c26e32"/><circle cx="5" cy="4.3" r="2.3" fill="#4a4a4a"/><circle cx="5.3" cy="4.8" r="1.2" fill="#9a9a9a"/><path d="M9.3 4.5h4.5M9.3 6.5h4.5M9.3 8.5h4.5" stroke="#4a64c0" stroke-width="0.9"/></svg>
<div class="t" style="left:63px;top:753.56px;font-size:14.7px;color:#1a1a1a">Würth GmbH&amp;Co. KG</div>
</div>
<div style="left:408px;top:211px;width:20px;height:762px;background:#f0f0f0"></div>
<svg style="left:412px;top:219px" width="11" height="8.5"><path d="M1 6.5 L5.5 1.2 L10 6.5" fill="none" stroke="#555" stroke-width="1.6"/></svg>
<svg style="left:412px;top:957px" width="11" height="8.5"><path d="M1 1.2 L5.5 6.5 L10 1.2" fill="none" stroke="#555" stroke-width="1.6"/></svg>
<div style="left:409px;top:716px;width:18px;height:123px;background:#cdcdcd"></div>
<div style="left:434px;top:93px;width:3px;height:879px;background:#a3b0b8"></div>
<div style="left:481px;top:93px;width:3px;height:879px;background:#a3b0b8"></div>
<div style="left:437px;top:91px;width:44px;height:881px;background:#fff"></div>
<svg style="left:440px;top:147px" width="36" height="33" viewBox="0 0 36 33">
<defs><linearGradient id="nb" x1="0" y1="0" x2="1" y2="1"><stop offset="0" stop-color="#a8c860"/><stop offset="1" stop-color="#5f8f2a"/></linearGradient></defs>
<path d="M11.5 2.5 L33.5 4.5 L31 31 L9.5 28z" fill="url(#nb)" stroke="#6a8a30" stroke-width="0.8"/>
<path d="M31.5 5 L34.5 5.5 L32.5 31.5 L30 31z" fill="#eef2c8"/>
<path d="M14 1.5 v3 M17 1.8 v3 M20 2.1 v3 M23 2.4 v3 M26 2.7 v3 M29 3 v3" stroke="#e8e8d8" stroke-width="1.2"/>
<circle cx="6.8" cy="10.5" r="4.6" fill="#fff" stroke="#4a2420" stroke-width="3"/>
<path d="M10.5 11.5 L19 13" stroke="#5a2a22" stroke-width="3.2"/>
<circle cx="20.5" cy="14" r="3.6" fill="#7a3a30"/>
<path d="M19.5 15 L22 15 L21.5 24 L19.5 24z" fill="#2a1410"/>
</svg>
<svg style="left:443px;top:184px" width="31" height="31"><circle cx="15.5" cy="15.5" r="14.5" fill="#22b84a"/><text x="15.5" y="20.5" text-anchor="middle" font-size="17" font-weight="bold" fill="#fff" stroke="#fff" stroke-width="0.8" font-family="Liberation Sans">1</text></svg>
<svg style="left:443px;top:221px" width="31" height="31"><circle cx="15.5" cy="15.5" r="14.5" fill="#3b22b0"/><text x="15.5" y="19.8" text-anchor="middle" font-size="13" font-weight="bold" letter-spacing="1.2" fill="#fff" font-family="Liberation Sans">K/L</text></svg>
<div style="left:484px;top:91px;width:1195px;height:881px;background:#fff"></div>
<div class="t" style="left:511px;top:112.33px;font-size:14.5px;color:#222">Firma (kurz)</div>
<div style="left:608px;top:103px;width:677px;height:27px;background:#fff;border:1px solid #adadad"></div>
<div class="t" style="left:611px;top:109.47px;font-size:14.8px;">Mustermann (Demo)</div>
<div style="left:492px;top:172px;width:1185px;height:797px;border:1px solid #d0d0d0;background:#fff"></div>
<div style="left:494px;top:147px;width:64px;height:26px;background:#f0f0f0;border:1px solid #c4c4c4;border-bottom:none"></div>
<div class="t" style="left:325.5px;width:400px;text-align:center;top:153.64px;font-size:14.6px;color:#1a1a1a">Adresse</div>
<div style="left:681px;top:147px;width:59px;height:26px;background:#f0f0f0;border:1px solid #c4c4c4;border-bottom:none"></div>
<div class="t" style="left:510.0px;width:400px;text-align:center;top:153.64px;font-size:14.6px;color:#1a1a1a">Details</div>
<div style="left:739px;top:147px;width:85px;height:26px;background:#f0f0f0;border:1px solid #c4c4c4;border-bottom:none"></div>
<div class="t" style="left:581.0px;width:400px;text-align:center;top:153.64px;font-size:14.6px;color:#1a1a1a">Kontakttyp</div>
<div style="left:823px;top:147px;width:122px;height:26px;background:#f0f0f0;border:1px solid #c4c4c4;border-bottom:none"></div>
<div class="t" style="left:683.5px;width:400px;text-align:center;top:153.64px;font-size:14.6px;color:#1a1a1a">Firma / Finanzen</div>
<div style="left:944px;top:147px;width:98px;height:26px;background:#f0f0f0;border:1px solid #c4c4c4;border-bottom:none"></div>
<div class="t" style="left:792.5px;width:400px;text-align:center;top:153.64px;font-size:14.6px;color:#1a1a1a">Links / Bilder</div>
<div style="left:1041px;top:147px;width:61px;height:26px;background:#f0f0f0;border:1px solid #c4c4c4;border-bottom:none"></div>
<div class="t" style="left:871.0px;width:400px;text-align:center;top:153.64px;font-size:14.6px;color:#1a1a1a">E-Mail</div>
<div style="left:1101px;top:147px;width:65px;height:26px;background:#f0f0f0;border:1px solid #c4c4c4;border-bottom:none"></div>
<div class="t" style="left:933.0px;width:400px;text-align:center;top:153.64px;font-size:14.6px;color:#1a1a1a">Notizen</div>
<div style="left:1165px;top:147px;width:72px;height:26px;background:#f0f0f0;border:1px solid #c4c4c4;border-bottom:none"></div>
<div class="t" style="left:1000.5px;width:400px;text-align:center;top:153.64px;font-size:14.6px;color:#1a1a1a">Kontakte</div>
<div style="left:1236px;top:147px;width:79px;height:26px;background:#f0f0f0;border:1px solid #c4c4c4;border-bottom:none"></div>
<div class="t" style="left:1075.0px;width:400px;text-align:center;top:153.64px;font-size:14.6px;color:#1a1a1a">Ereignisse</div>
<div style="left:1314px;top:147px;width:70px;height:26px;background:#f0f0f0;border:1px solid #c4c4c4;border-bottom:none"></div>
<div class="t" style="left:1148.5px;width:400px;text-align:center;top:153.64px;font-size:14.6px;color:#1a1a1a">Gewerke</div>
<div style="left:1383px;top:147px;width:108px;height:26px;background:#f0f0f0;border:1px solid #c4c4c4;border-bottom:none"></div>
<div class="t" style="left:1236.5px;width:400px;text-align:center;top:153.64px;font-size:14.6px;color:#1a1a1a">Preisaufteilung</div>
<div style="left:556px;top:145px;width:125px;height:28px;background:#fff;border:1px solid #c4c4c4;border-bottom:none"></div>
<div class="t" style="left:418.5px;width:400px;text-align:center;top:151.24px;font-size:14.6px;color:#1a1a1a">Ansprechpartner</div>
<div style="left:496px;top:174px;width:1174px;height:35px;background:#eda88e"></div>
<div style="left:498px;top:181px;width:15px;height:20px;background:#f3c3b0;border:1px solid #f8ddd2"></div>
<div style="left:514px;top:181px;width:15px;height:20px;background:#f3c3b0;border:1px solid #f8ddd2"></div>
<svg style="left:500px;top:184px" width="12" height="14"><path d="M1 1.5 H10 L6.8 6.5 V11.5 L4.2 11.5 V6.5z" fill="none" stroke="#333" stroke-width="1.3"/></svg>
<svg style="left:516px;top:184px" width="12" height="14"><path d="M1 1.5 H10 L6.8 6.5 V11.5 L4.2 11.5 V6.5z" fill="none" stroke="#333" stroke-width="1.3"/><path d="M2 4 L10 12 M10 4 L2 12" stroke="#c0302a" stroke-width="1.4"/></svg>
<div style="left:533px;top:178px;width:77px;height:27px;background:#fff;border:1px solid #e7c2b4;"></div>
<svg style="left:595px;top:188px" width="11" height="8.5"><path d="M1 1.2 L5.5 6.5 L10 1.2" fill="none" stroke="#444" stroke-width="1.9"/></svg>
<div style="left:613px;top:178px;width:119px;height:27px;background:#fff;border:1px solid #e7c2b4;"></div>
<svg style="left:717px;top:188px" width="11" height="8.5"><path d="M1 1.2 L5.5 6.5 L10 1.2" fill="none" stroke="#444" stroke-width="1.9"/></svg>
<div style="left:735px;top:178px;width:120px;height:27px;background:#fff;border:1px solid #e7c2b4;"></div>
<svg style="left:840px;top:188px" width="11" height="8.5"><path d="M1 1.2 L5.5 6.5 L10 1.2" fill="none" stroke="#444" stroke-width="1.9"/></svg>
<div style="left:858px;top:178px;width:114px;height:27px;background:#fff;border:1px solid #e7c2b4;"></div>
<svg style="left:957px;top:188px" width="11" height="8.5"><path d="M1 1.2 L5.5 6.5 L10 1.2" fill="none" stroke="#444" stroke-width="1.9"/></svg>
<div style="left:975px;top:178px;width:163px;height:27px;background:#fff;border:1px solid #e7c2b4;"></div>
<svg style="left:1123px;top:188px" width="11" height="8.5"><path d="M1 1.2 L5.5 6.5 L10 1.2" fill="none" stroke="#444" stroke-width="1.9"/></svg>
<div style="left:1141px;top:178px;width:69px;height:27px;background:#fff;border:1px solid #e7c2b4;"></div>
<svg style="left:1195px;top:188px" width="11" height="8.5"><path d="M1 1.2 L5.5 6.5 L10 1.2" fill="none" stroke="#444" stroke-width="1.9"/></svg>
<div style="left:1214px;top:178px;width:118px;height:27px;background:#fff;border:1px solid #e7c2b4;"></div>
<svg style="left:1317px;top:188px" width="11" height="8.5"><path d="M1 1.2 L5.5 6.5 L10 1.2" fill="none" stroke="#444" stroke-width="1.9"/></svg>
<div style="left:1336px;top:178px;width:100px;height:27px;background:#fff;border:1px solid #e7c2b4;"></div>
<svg style="left:1421px;top:188px" width="11" height="8.5"><path d="M1 1.2 L5.5 6.5 L10 1.2" fill="none" stroke="#444" stroke-width="1.9"/></svg>
<div style="left:1439px;top:178px;width:135px;height:27px;background:#fff;border:1px solid #e7c2b4;"></div>
<svg style="left:1559px;top:188px" width="11" height="8.5"><path d="M1 1.2 L5.5 6.5 L10 1.2" fill="none" stroke="#444" stroke-width="1.9"/></svg>
<div style="left:1578px;top:178px;width:92px;height:27px;background:#fff;border:1px solid #e7c2b4;border-right:none;"></div>
<div class="t" style="left:616px;top:183.87px;font-size:14.8px;">IN("Maier Dr."</div>
<div style="left:497px;top:210px;width:1173px;height:608px;background:#fff;border-left:2px solid #707070;border-top:2px solid #707070"></div>
<div style="left:499px;top:212px;width:1171px;height:25px;background:#f0f0f0;border-bottom:1px solid #a0a0a0"></div>
<div style="left:532px;top:214px;width:1px;height:22px;background:#c8c8c8"></div>
<div style="left:612px;top:214px;width:1px;height:22px;background:#c8c8c8"></div>
<div style="left:734px;top:214px;width:1px;height:22px;background:#c8c8c8"></div>
<div style="left:857px;top:214px;width:1px;height:22px;background:#c8c8c8"></div>
<div style="left:974px;top:214px;width:1px;height:22px;background:#c8c8c8"></div>
<div style="left:1140px;top:214px;width:1px;height:22px;background:#c8c8c8"></div>
<div style="left:1212px;top:214px;width:1px;height:22px;background:#c8c8c8"></div>
<div style="left:1334px;top:214px;width:1px;height:22px;background:#c8c8c8"></div>
<div style="left:1438px;top:214px;width:1px;height:22px;background:#c8c8c8"></div>
<div style="left:1576px;top:214px;width:1px;height:22px;background:#c8c8c8"></div>
<div class="t" style="left:537px;top:218.27px;font-size:14.8px;">Anrede</div>
<div class="t" style="left:617px;top:218.27px;font-size:14.8px;">Name</div>
<div class="t" style="left:739px;top:218.27px;font-size:14.8px;">Vorname</div>
<div class="t" style="left:862px;top:218.27px;font-size:14.8px;">Abtlg.</div>
<div class="t" style="left:979px;top:218.27px;font-size:14.8px;">Position</div>
<div class="t" style="left:1145px;top:218.27px;font-size:14.8px;">PLZ</div>
<div class="t" style="left:1217px;top:218.27px;font-size:14.8px;">Ort</div>
<div class="t" style="left:1339px;top:218.27px;font-size:14.8px;">Telefon</div>
<div class="t" style="left:1443px;top:218.27px;font-size:14.8px;">Mobil</div>
<div class="t" style="left:1581px;top:218.27px;font-size:14.8px;">E-Mail</div>
<div style="left:499px;top:238px;width:33px;height:24px;background:#efefef;border-bottom:1px solid #a0a0a0;border-right:1px solid #a0a0a0"></div>
<div style="left:532px;top:261px;width:1138px;height:1px;background:#e8e8e8"></div>
<div class="t" style="left:535px;top:243.77px;font-size:14.8px;">Frau</div>
<div class="t" style="left:615px;top:243.77px;font-size:14.8px;">Müller Dr.</div>
<div style="left:499px;top:262px;width:33px;height:24px;background:#efefef;border-bottom:1px solid #a0a0a0;border-right:1px solid #a0a0a0"></div>
<div style="left:532px;top:285px;width:1138px;height:1px;background:#e8e8e8"></div>
<div class="t" style="left:535px;top:267.77px;font-size:14.8px;">Frau</div>
<div class="t" style="left:615px;top:267.77px;font-size:14.8px;">Müller</div>
<div class="t" style="left:737px;top:267.77px;font-size:14.8px;">Cornelie</div>
<div style="left:499px;top:286px;width:33px;height:24px;background:#efefef;border-bottom:1px solid #a0a0a0;border-right:1px solid #a0a0a0"></div>
<div style="left:532px;top:309px;width:1138px;height:1px;background:#e8e8e8"></div>
<div class="t" style="left:535px;top:291.77px;font-size:14.8px;">Herr</div>
<div class="t" style="left:615px;top:291.77px;font-size:14.8px;">Müller Prof.</div>
<div class="t" style="left:737px;top:291.77px;font-size:14.8px;">Hubert</div>
<div style="left:499px;top:310px;width:33px;height:24px;background:#efefef;border-bottom:1px solid #a0a0a0;border-right:1px solid #a0a0a0"></div>
<div style="left:532px;top:333px;width:1138px;height:1px;background:#e8e8e8"></div>
<div class="t" style="left:535px;top:315.77px;font-size:14.8px;">Herr</div>
<div class="t" style="left:615px;top:315.77px;font-size:14.8px;">Maier Dr.</div>
<div class="t" style="left:737px;top:315.77px;font-size:14.8px;">Max</div>
<div class="t" style="left:860px;top:315.77px;font-size:14.8px;">Arbe</div>
<div style="left:499px;top:334px;width:33px;height:24px;background:#efefef;border-bottom:1px solid #a0a0a0;border-right:1px solid #a0a0a0"></div>
<div style="left:532px;top:357px;width:1138px;height:1px;background:#e8e8e8"></div>
<div class="t" style="left:535px;top:339.77px;font-size:14.8px;">Herr</div>
<div class="t" style="left:615px;top:339.77px;font-size:14.8px;">Muster Dr.</div>
<div class="t" style="left:737px;top:339.77px;font-size:14.8px;">Max</div>
<div class="t" style="left:860px;top:339.77px;font-size:14.8px;">Mar</div>
<div style="left:499px;top:358px;width:33px;height:24px;background:#efefef;border-bottom:1px solid #a0a0a0;border-right:1px solid #a0a0a0"></div>
<div style="left:532px;top:358px;width:1138px;height:23px;background:#99b5d7"></div>
<div style="left:532px;top:381px;width:1138px;height:1px;background:#e8e8e8"></div>
<div class="t" style="left:535px;top:363.77px;font-size:14.8px;">Herr</div>
<div class="t" style="left:615px;top:363.77px;font-size:14.8px;">Muster Dr.</div>
<div class="t" style="left:737px;top:363.77px;font-size:14.8px;">Max Giovanni</div>
<div class="t" style="left:860px;top:363.77px;font-size:14.8px;">Mar</div>
<div style="left:499px;top:382px;width:33px;height:24px;background:#efefef;border-bottom:1px solid #a0a0a0;border-right:1px solid #a0a0a0"></div>
<div style="left:532px;top:405px;width:1138px;height:1px;background:#e8e8e8"></div>
<div class="t" style="left:535px;top:387.77px;font-size:14.8px;">Mr.</div>
<div class="t" style="left:615px;top:387.77px;font-size:14.8px;">O'Toole</div>
<div class="t" style="left:737px;top:387.77px;font-size:14.8px;">Peter</div>
<div style="left:612px;top:237px;width:1px;height:168px;background:#e8e8e8"></div>
<div style="left:734px;top:237px;width:1px;height:168px;background:#e8e8e8"></div>
<div style="left:857px;top:237px;width:1px;height:168px;background:#e8e8e8"></div>
<div style="left:974px;top:237px;width:1px;height:168px;background:#e8e8e8"></div>
<div style="left:1140px;top:237px;width:1px;height:168px;background:#e8e8e8"></div>
<div style="left:1212px;top:237px;width:1px;height:168px;background:#e8e8e8"></div>
<div style="left:1334px;top:237px;width:1px;height:168px;background:#e8e8e8"></div>
<div style="left:1438px;top:237px;width:1px;height:168px;background:#e8e8e8"></div>
<div style="left:1576px;top:237px;width:1px;height:168px;background:#e8e8e8"></div>
<svg style="left:503px;top:364px" width="7" height="12"><path d="M0 0 L6 6 L0 12z" fill="#111"/></svg>
<div style="left:499px;top:798px;width:1171px;height:20px;background:#f0f0f0"></div>
<div style="left:519px;top:799px;width:1151px;height:18px;background:#cdcdcd"></div>
<svg style="left:503px;top:802px" width="9" height="12"><path d="M7 1.5 L2.5 6 L7 10.5" fill="none" stroke="#444" stroke-width="2"/></svg>
<div style="left:497px;top:822px;width:1173px;height:31px;background:linear-gradient(#fbfbfb,#f2f2f2);border-bottom:1px solid #d6d6d6;border-left:2px solid #707070;border-top:2px solid #707070"></div>
<div style="left:501px;top:828px;width:2px;height:19px;background:repeating-linear-gradient(#a0a0a0 0 2px,transparent 2px 4px)"></div>
<div style="left:508px;top:824px;width:100px;height:28px;background:#fff"></div>
<svg style="left:612px;top:832px" width="16" height="9"><path d="M1.5 1.5 L8 7 L14.5 1.5" fill="none" stroke="#111" stroke-width="1.8"/></svg>
<svg style="left:635px;top:832px" width="16" height="9"><path d="M1.5 7.5 L8 2 L14.5 7.5" fill="none" stroke="#111" stroke-width="1.8"/></svg>
<div style="left:496px;top:869px;width:1180px;height:90px;background:#f0f0f0;border:1px solid #b8b8b8"></div>
<div style="left:888px;top:237px;width:787px;height:728px;background:#6a9af0;border:1px solid #5a86d8;border-top-color:#8aa0c0"></div>
<div class="t" style="left:1081.0px;width:400px;text-align:center;top:247.82px;font-size:19px;color:#1d3566">Ansprechpartner</div>
<div style="left:897px;top:275px;width:769px;height:681px;background:#f0f0f0;border:1px solid #9fb9e6"></div>
<div class="t" style="left:912px;top:290.73px;font-size:14.5px;color:#1a1a1a">Firma</div>
<div style="left:1004px;top:287px;width:372px;height:27px;background:#f0f0f0;border:1px solid #7eb4ea"></div>
<div style="left:1006px;top:290px;width:139px;height:20px;background:#3392f5"></div>
<div class="t" style="left:1007px;top:293.87px;font-size:14.8px;color:#fff">Mustermann (Demo)</div>
<div style="left:897px;top:352px;width:767px;height:544px;background:#fff;border:1px solid #c8c8c8;border-left:none"></div>
<div style="left:965px;top:327px;width:115px;height:26px;background:#f0f0f0;border:1px solid #bcbcbc;border-bottom:none"></div>
<div class="t" style="left:822.0px;width:400px;text-align:center;top:333.64px;font-size:14.6px;">Kommunikation</div>
<div style="left:1079px;top:327px;width:86px;height:26px;background:#f0f0f0;border:1px solid #bcbcbc;border-bottom:none"></div>
<div class="t" style="left:921.5px;width:400px;text-align:center;top:333.64px;font-size:14.6px;">Kontakttyp</div>
<div style="left:1164px;top:327px;width:71px;height:26px;background:#f0f0f0;border:1px solid #bcbcbc;border-bottom:none"></div>
<div class="t" style="left:999.0px;width:400px;text-align:center;top:333.64px;font-size:14.6px;">Finanzen</div>
<div style="left:1234px;top:327px;width:72px;height:26px;background:#f0f0f0;border:1px solid #bcbcbc;border-bottom:none"></div>
<div class="t" style="left:1069.5px;width:400px;text-align:center;top:333.64px;font-size:14.6px;">Kontakte</div>
<div style="left:1305px;top:327px;width:61px;height:26px;background:#f0f0f0;border:1px solid #bcbcbc;border-bottom:none"></div>
<div class="t" style="left:1135.0px;width:400px;text-align:center;top:333.64px;font-size:14.6px;">Details</div>
<div style="left:1365px;top:327px;width:98px;height:26px;background:#f0f0f0;border:1px solid #bcbcbc;border-bottom:none"></div>
<div class="t" style="left:1213.5px;width:400px;text-align:center;top:333.64px;font-size:14.6px;">Links / Bilder</div>
<div style="left:1462px;top:327px;width:61px;height:26px;background:#f0f0f0;border:1px solid #bcbcbc;border-bottom:none"></div>
<div class="t" style="left:1292.0px;width:400px;text-align:center;top:333.64px;font-size:14.6px;">E-Mail</div>
<div style="left:1522px;top:327px;width:63px;height:26px;background:#f0f0f0;border:1px solid #bcbcbc;border-bottom:none"></div>
<div class="t" style="left:1353.0px;width:400px;text-align:center;top:333.64px;font-size:14.6px;">Notizen</div>
<div style="left:897px;top:325px;width:68px;height:28px;background:#fff;border:1px solid #c8c8c8;border-bottom:none;border-left:none"></div>
<div class="t" style="left:731.0px;width:400px;text-align:center;top:332.34px;font-size:14.6px;">Adresse</div>
<div style="left:1642px;top:353px;width:20px;height:542px;background:#f0f0f0"></div>
<svg style="left:1646px;top:361px" width="11" height="8.5"><path d="M1 6.5 L5.5 1.2 L10 6.5" fill="none" stroke="#555" stroke-width="1.6"/></svg>
<svg style="left:1646px;top:879px" width="11" height="8.5"><path d="M1 1.2 L5.5 6.5 L10 1.2" fill="none" stroke="#555" stroke-width="1.6"/></svg>
<div style="left:1643px;top:375px;width:18px;height:410px;background:#cdcdcd"></div>
<div style="left:912px;top:376px;width:651px;height:271px;border:1px solid #dcdcdc"></div>
<div style="left:919px;top:368px;width:124px;height:14px;background:#fff"></div>
<div class="t" style="left:922px;top:368.84px;font-size:14.6px;">Persönliche Daten</div>
<div class="t" style="left:924px;top:400.14px;font-size:14.6px;">Name</div>
<div class="t" style="left:924px;top:441.24px;font-size:14.6px;">Vorname</div>
<div class="t" style="left:924px;top:482.84px;font-size:14.6px;">Weitere V.</div>
<div class="t" style="left:924px;top:523.64px;font-size:14.6px;">Titel</div>
<div class="t" style="left:924px;top:565.94px;font-size:14.6px;">Zusatz</div>
<div class="t" style="left:924px;top:606.94px;font-size:14.6px;">Pers.-Nr.</div>
<div style="left:1019px;top:391px;width:201px;height:27px;background:#fff;border:1px solid #a9a9a9"></div>
<div class="t" style="left:1022px;top:397.97px;font-size:14.8px;">Muster</div>
<div style="left:1019px;top:433px;width:201px;height:27px;background:#fff;border:1px solid #a9a9a9"></div>
<div class="t" style="left:1022px;top:439.97px;font-size:14.8px;">Max</div>
<div style="left:1019px;top:474px;width:201px;height:27px;background:#fff;border:1px solid #a9a9a9"></div>
<div class="t" style="left:1022px;top:480.97px;font-size:14.8px;">Giovanni</div>
<div style="left:1019px;top:516px;width:201px;height:27px;background:#fff;border:1px solid #a9a9a9"></div>
<div class="t" style="left:1022px;top:522.97px;font-size:14.8px;">Dr.</div>
<div style="left:1019px;top:557px;width:201px;height:27px;background:#fff;border:1px solid #a9a9a9"></div>
<div style="left:1019px;top:599px;width:148px;height:27px;background:#fff;border:1px solid #a9a9a9"></div>
<svg style="left:1203px;top:525px" width="11" height="8.5"><path d="M1 1.2 L5.5 6.5 L10 1.2" fill="none" stroke="#444" stroke-width="1.6"/></svg>
<div class="t" style="left:1247px;top:399.54px;font-size:14.6px;">Anrede</div>
<div class="t" style="left:1247px;top:440.94px;font-size:14.6px;">Position</div>
<div class="t" style="left:1247px;top:482.84px;font-size:14.6px;">Abteilung</div>
<div class="t" style="left:1247px;top:566.24px;font-size:14.6px;">Geburtstag</div>
<div style="left:1339px;top:391px;width:201px;height:28px;background:linear-gradient(#f0f0f0,#e4e4e4);border:1px solid #a9a9a9"></div>
<div class="t" style="left:1343px;top:398.47px;font-size:14.8px;">Herr</div>
<svg style="left:1523px;top:400px" width="11" height="8.5"><path d="M1 1.2 L5.5 6.5 L10 1.2" fill="none" stroke="#444" stroke-width="1.6"/></svg>
<div style="left:1339px;top:433px;width:201px;height:27px;background:#fff;border:1px solid #a9a9a9"></div>
<div class="t" style="left:1342px;top:439.47px;font-size:14.8px;">Marketingleiter</div>
<svg style="left:1523px;top:442px" width="11" height="8.5"><path d="M1 1.2 L5.5 6.5 L10 1.2" fill="none" stroke="#444" stroke-width="1.6"/></svg>
<div style="left:1339px;top:474px;width:201px;height:72px;background:#fff;border:1px solid #a9a9a9"></div>
<div class="t" style="left:1346px;top:481.22px;font-size:14.8px;">Marketing / Vertrieb</div>
<div style="left:1339px;top:556px;width:148px;height:27px;background:#fff;border:1px solid #a9a9a9"></div>
<div class="t" style="left:1341px;top:563.07px;font-size:14.8px;">08.02.2019</div>
<svg style="left:1453px;top:562px" width="26" height="15"><rect x="0.5" y="0.5" width="13" height="13" fill="#eef0f4" stroke="#8a93a8"/><path d="M0.5 4.5h13M0.5 7.5h13M0.5 10.5h13M4.5 0.5v13M7.5 0.5v13M10.5 0.5v13" stroke="#b8bfcc" stroke-width="0.8"/><path d="M15 4 h9 l-4.5 5z" fill="#3d5a9a"/></svg>
<div style="left:912px;top:667px;width:487px;height:228px;border:1px solid #dcdcdc;border-bottom:none"></div>
<div style="left:919px;top:659px;width:82px;height:14px;background:#fff"></div>
<div class="t" style="left:922px;top:659.74px;font-size:14.6px;">Anschriften</div>
<div class="t" style="left:927px;top:699.04px;font-size:14.6px;">Straße</div>
<div class="t" style="left:927px;top:779.94px;font-size:14.6px;">PLZ, Ort</div>
<div class="t" style="left:927px;top:822.44px;font-size:14.6px;">Land</div>
<div class="t" style="left:927px;top:865.04px;font-size:14.6px;">Region</div>
<div style="left:988px;top:691px;width:26px;height:30px;background:linear-gradient(#f2f2f2,#e2e2e2);border:1px solid #adadad"></div>
<svg style="left:995px;top:701px" width="12" height="9.0"><path d="M1 1.2 L6.0 7.0 L11 1.2" fill="none" stroke="#333" stroke-width="1.9"/></svg>
<div style="left:1019px;top:691px;width:372px;height:69px;background:#fff;border:1px solid #a9a9a9"></div>
<div class="t" style="left:1026px;top:696.87px;font-size:14.8px;">Musterstr. 105b</div>
<div style="left:1019px;top:772px;width:73px;height:27px;background:#fff;border:1px solid #a9a9a9"></div>
<div class="t" style="left:1022px;top:778.07px;font-size:14.8px;">12346</div>
<div style="left:1102px;top:772px;width:289px;height:27px;background:#fff;border:1px solid #a9a9a9"></div>
<div class="t" style="left:1105px;top:778.07px;font-size:14.8px;">Musterstadt</div>
<div style="left:1019px;top:813px;width:372px;height:28px;background:#fff;border:1px solid #a9a9a9"></div>
<div class="t" style="left:1024px;top:819.67px;font-size:14.8px;">D - Deutschland</div>
<svg style="left:1374px;top:822px" width="11" height="8.5"><path d="M1 1.2 L5.5 6.5 L10 1.2" fill="none" stroke="#444" stroke-width="1.6"/></svg>
<div style="left:1019px;top:856px;width:336px;height:27px;background:#fff;border:1px solid #a9a9a9"></div>
<div class="t" style="left:1022px;top:862.57px;font-size:14.8px;">Region 123</div>
<div style="left:1365px;top:857px;width:26px;height:30px;background:linear-gradient(#f2f2f2,#e2e2e2);border:1px solid #adadad"></div>
<svg style="left:1370px;top:864px" width="16" height="16"><circle cx="8" cy="8" r="5.5" fill="#5aa87a"/><circle cx="6.5" cy="6.5" r="2.5" fill="#a8d8b0"/></svg>
<div style="left:1413px;top:665px;width:147px;height:171px;background:#f4f4f4;border:1px solid #555"></div>
<svg style="left:1414px;top:666px;filter:blur(0.6px)" width="145" height="169" viewBox="0 0 145 169">
<defs>
<linearGradient id="bg1" x1="0" y1="0" x2="1" y2="0"><stop offset="0" stop-color="#e8e8e8"/><stop offset="0.35" stop-color="#f4f4f4"/><stop offset="1" stop-color="#fcfcfc"/></linearGradient>
<linearGradient id="face" x1="0" y1="0" x2="1" y2="0"><stop offset="0" stop-color="#d8d8d8"/><stop offset="0.3" stop-color="#ececec"/><stop offset="0.7" stop-color="#d6d6d6"/><stop offset="1" stop-color="#8a8a8a"/></linearGradient>
</defs>
<rect width="145" height="169" fill="url(#bg1)"/>
<!-- neck -->
<path d="M58 112 L96 100 L98 125 L70 140 L52 128z" fill="#c8c8c8"/>
<!-- suit left -->
<path d="M5 169 L8 150 Q12 138 24 130 L42 119 L50 135 L56 169z" fill="#262626"/>
<path d="M12 146 Q16 140 20 144 L18 162 L12 160z" fill="#7a7a7a"/>
<!-- suit right -->
<path d="M96 103 Q120 112 145 128 L145 169 L82 169 L88 128z" fill="#1e1e1e"/>
<path d="M90 120 L82 169 L90 169 L96 124z" fill="#3a3a3a"/>
<!-- shirt -->
<path d="M44 126 L60 132 L92 116 L90 140 L84 169 L48 169z" fill="#e2e2e2"/>
<!-- tie -->
<path d="M58 134 L70 128 L74 140 L66 169 L54 169 L60 146z" fill="#555"/>
<path d="M62 132 L72 130 L72 140 L64 142z" fill="#3a3a3a"/>
<!-- ear -->
<ellipse cx="102" cy="80" rx="6" ry="10" fill="#6e6e6e"/>
<!-- face -->
<path d="M33 58 Q32 92 44 112 Q56 130 74 126 Q94 118 100 92 Q104 66 96 52 L44 50 Q34 52 33 58z" fill="url(#face)"/>
<!-- hair -->
<path d="M22 44 Q20 56 30 66 Q32 58 34 54 Q40 50 50 50 L90 50 Q96 56 98 66 L100 84 Q112 76 118 60 Q118 48 112 42z" fill="#1c1c1c"/>
<!-- brows/eyes -->
<path d="M35 68 Q42 63 49 67" stroke="#333" stroke-width="3" fill="none"/>
<path d="M62 66 Q72 61 84 66" stroke="#2a2a2a" stroke-width="3.5" fill="none"/>
<path d="M37 75 Q43 72 49 76" stroke="#555" stroke-width="2.5" fill="none"/>
<path d="M64 75 Q72 71 80 76" stroke="#555" stroke-width="2.5" fill="none"/>
<path d="M52 78 Q50 90 54 96 Q60 98 66 94" stroke="#9a9a9a" stroke-width="2" fill="none"/>
<!-- mustache / smile -->
<path d="M44 98 Q54 93 66 98 L65 103 L46 103z" fill="#111"/>
<path d="M45 104 Q58 116 72 104 Q58 108 45 104z" fill="#f2f2f2" stroke="#333" stroke-width="1.6"/>
<!-- hat -->
<path d="M18 40 Q18 33 28 34 Q70 30 114 33 Q122 32 122 38 Q116 46 70 45 Q24 46 18 40z" fill="#222"/>
<path d="M34 34 Q32 6 46 1 L100 1 Q108 6 106 34 Q70 38 34 34z" fill="#161616"/>
<path d="M34 28 Q70 32 106 28 L106 35 Q70 40 34 35z" fill="#383838"/>
</svg>
<div style="left:1412px;top:852px;width:16px;height:16px;background:#fff;border:1px solid #333"></div>
<div class="t" style="left:1436px;top:853.54px;font-size:14.6px;">Veraltet</div>
<svg style="left:1608px;top:728px" width="14" height="22"><path d="M1 1 L1 17 L5 13.5 L8 20 L10.5 19 L7.5 12.5 L12.5 12.5z" fill="#fff" stroke="#111" stroke-width="1"/></svg>
<div style="left:913px;top:907px;width:137px;height:32px;background:linear-gradient(#f4f4f4,#e4e4e4);border:1px solid #acacac"></div>
<div class="t" style="left:781.0px;width:400px;text-align:center;top:916.07px;font-size:14.8px;">OK</div>
<div style="left:1059px;top:907px;width:137px;height:32px;background:linear-gradient(#f4f4f4,#e4e4e4);border:1px solid #acacac"></div>
<div class="t" style="left:927.0px;width:400px;text-align:center;top:916.07px;font-size:14.8px;">Abbrechen</div>
<svg style="left:1220px;top:913px" width="44" height="14"><rect x="1" y="1" width="2" height="12" fill="#2d6fd6"/><path d="M11 1 L4 7 L11 13z" fill="#2d6fd6"/><path d="M34 2 L27 7 L34 12z" fill="#2d6fd6"/><rect x="42" y="0" width="1" height="14" fill="#cfcfcf"/></svg>
<div style="left:1269px;top:906px;width:301px;height:28px;background:linear-gradient(#f3f3f3,#e5e5e5);border:1px solid #acacac"></div>
<div class="t" style="left:1273px;top:913.87px;font-size:14.8px;">Muster, Max Marketing / Vertrieb</div>
<svg style="left:1552px;top:917px" width="11" height="8.5"><path d="M1 1.2 L5.5 6.5 L10 1.2" fill="none" stroke="#444" stroke-width="1.8"/></svg>
<svg style="left:1572px;top:912px" width="72" height="18"><rect x="0" y="1" width="1" height="16" fill="#cfcfcf"/><path d="M9 4 L16 9 L9 14z" fill="#2d6fd6"/><path d="M32 4 L39 9 L32 14z" fill="#2d6fd6"/><rect x="40" y="4" width="2" height="10" fill="#2d6fd6"/><path d="M61 1.5 V16.5 M53.5 9 H68.5 M56 4 L66 14 M66 4 L56 14" stroke="#4f8ae8" stroke-width="2"/></svg>
<svg style="left:1655px;top:944px" width="10" height="10"><rect x="6" y="2" width="2" height="2" fill="#bbb"/><rect x="3" y="5" width="2" height="2" fill="#bbb"/><rect x="6" y="5" width="2" height="2" fill="#bbb"/></svg>
<div style="left:9px;top:974px;width:1670px;height:25px;background:linear-gradient(90deg,#3f8eab 0%,#5fa0b9 20%,#8fbdcd 50%,#bfd9e2 72%,#dce9ee 88%,#eef4f6 100%)"></div>
<div class="t" style="left:14px;top:979.93px;font-size:14.5px;color:#f2fbff">DW.address</div>
<div class="t" style="left:1531px;top:979.93px;font-size:14.5px;color:#111">Schinagl, Elmar</div>
<svg style="left:1641px;top:980px" width="14" height="14"><rect x="0.5" y="0.5" width="12" height="12" fill="#111"/><rect x="3" y="1" width="7" height="4" fill="#d8d8a8"/><rect x="4" y="8" width="5" height="4" fill="#888"/></svg>
<svg style="left:1666px;top:985px" width="10" height="10"><rect x="6" y="1" width="2" height="2" fill="#888"/><rect x="3" y="4" width="2" height="2" fill="#888"/><rect x="6" y="4" width="2" height="2" fill="#888"/><rect x="0" y="7" width="2" height="2" fill="#888"/><rect x="3" y="7" width="2" height="2" fill="#888"/><rect x="6" y="7" width="2" height="2" fill="#888"/></svg>
</body></html>
